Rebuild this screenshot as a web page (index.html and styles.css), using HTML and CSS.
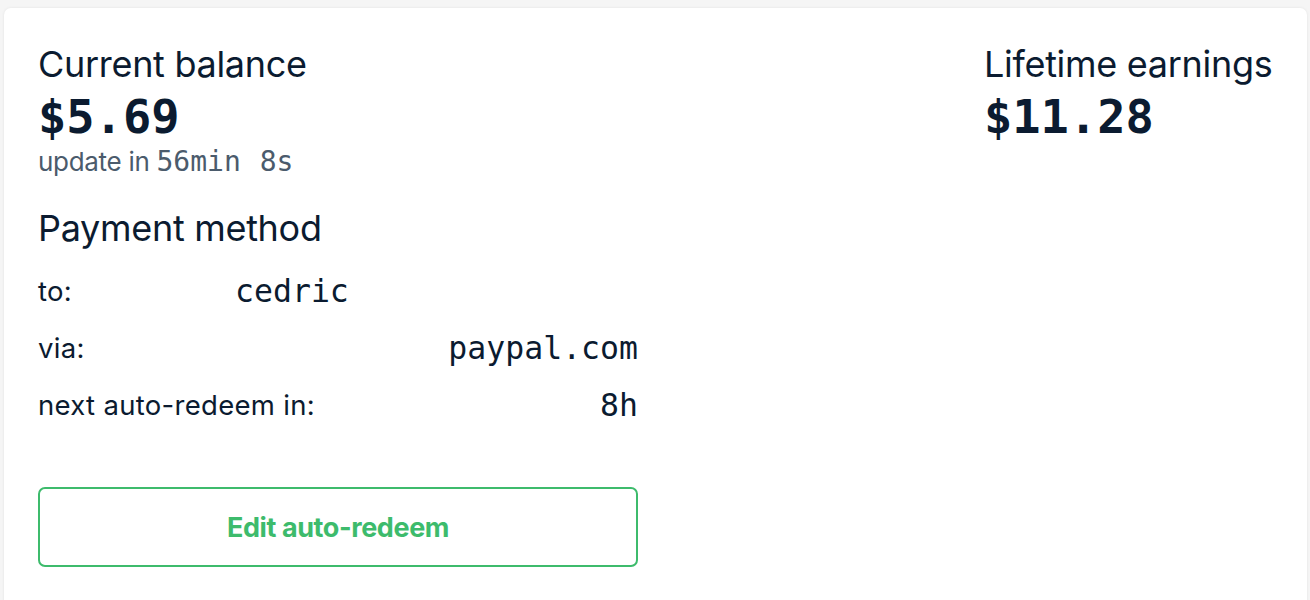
FILE: index.html
```html
<!DOCTYPE html>
<html lang="en">
<head>
    <meta charset="UTF-8">
    <meta name="viewport" content="width=device-width, initial-scale=1.0">
    <title>Balance</title>
    <link rel="stylesheet" href="styles.css">
</head>
<body>
    <div class="balance-card">
        <div class="main-col">
            <h2>Current balance</h2>
            <div class="amount">$5.69</div>
            <div class="update">update in <span class="mono">56min 8s</span></div>

            <h2 class="section-title">Payment method</h2>
            <div class="pay-rows">
                <div class="pay-row">
                    <span class="label">to:</span>
                    <span class="value value-to">cedric</span>
                </div>
                <div class="pay-row">
                    <span class="label">via:</span>
                    <span class="value">paypal.com</span>
                </div>
                <div class="pay-row">
                    <span class="label">next auto-redeem in:</span>
                    <span class="value">8h</span>
                </div>
            </div>

            <button class="btn-outline">Edit auto-redeem</button>
        </div>
        <div class="side-col">
            <h2>Lifetime earnings</h2>
            <div class="amount">$11.28</div>
        </div>
    </div>
</body>
</html>
```

FILE: styles.css
```css
body {
    margin: 0;
    padding: 8px 3px 0 4px;
    background: #f5f5f5;
    font-family: "Inter", sans-serif;
    color: #0b1b30;
}
.balance-card {
    display: flex;
    justify-content: space-between;
    background: #fff;
    border-radius: 7px;
    box-shadow: 0 0 3px rgba(0,0,0,0.08);
    padding: 35px 34px 32px 34px;
    min-height: 600px;
}
.main-col { width: 600px; }
.side-col { width: 289px; }
h2 {
    margin: 0;
    font-size: 36px;
    font-weight: 400;
    line-height: 42px;
    letter-spacing: -0.3px;
}
.amount {
    margin-top: 4px;
    font-family: "DejaVu Sans Mono", monospace;
    font-size: 47px;
    font-weight: 700;
    line-height: 56px;
}
.update {
    color: #4b5b6c;
    font-size: 26px;
    line-height: 34px;
    letter-spacing: -0.3px;
}
.mono {
    font-family: "DejaVu Sans Mono", monospace;
    font-size: 28px;
    letter-spacing: 0;
    word-spacing: 2px;
}
.section-title { margin-top: 28px; }
.pay-rows { margin-top: 13px; }
.pay-row {
    display: flex;
    justify-content: space-between;
    font-size: 27.5px;
    height: 57px;
    align-items: center;
    letter-spacing: 0.3px;
}
.value {
    font-family: "DejaVu Sans Mono", monospace;
    font-size: 31.5px;
    letter-spacing: 0;
}
.value-to {
    margin-right: auto;
    margin-left: 163px;
}
.btn-outline {
    display: block;
    width: 100%;
    height: 80px;
    margin-top: 54px;
    background: #fff;
    border: 2px solid #3dbb6c;
    border-radius: 7px;
    color: #3dbb6c;
    font-family: "Inter", sans-serif;
    font-size: 27px;
    font-weight: 700;
    letter-spacing: -0.4px;
    cursor: pointer;
}
```
